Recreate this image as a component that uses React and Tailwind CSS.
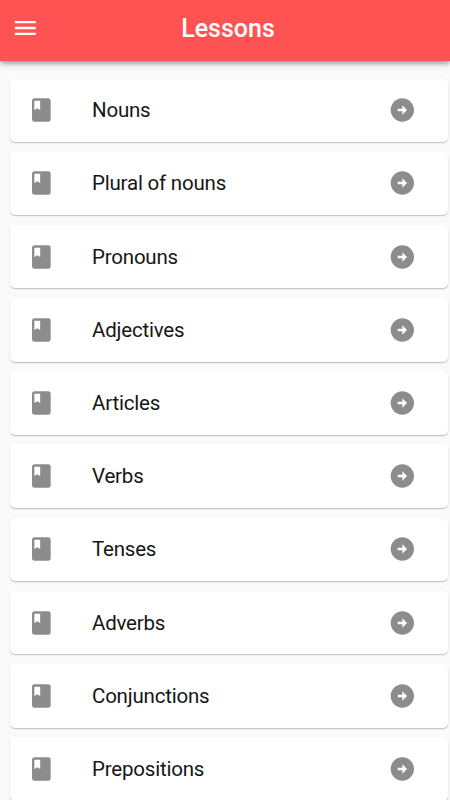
const lessons = [
  "Nouns",
  "Plural of nouns",
  "Pronouns",
  "Adjectives",
  "Articles",
  "Verbs",
  "Tenses",
  "Adverbs",
  "Conjunctions",
  "Prepositions",
];

const Icon = ({ d }) => (
  <svg
    viewBox="-0.3 0 24 24"
    fill="currentColor"
    className="h-7 w-7 shrink-0"
  >
    <path d={d} />
  </svg>
);

const MENU = "M3 18h18v-2H3v2zm0-5h18v-2H3v2zm0-7v2h18V6H3z";
const BOOK =
  "M18 2H6c-1.1 0-2 .9-2 2v16c0 1.1.9 2 2 2h12c1.1 0 2-.9 2-2V4c0-1.1-.9-2-2-2zM6 4h5v8l-2.5-1.5L6 12V4z";
const ARROW =
  "M22 12c0-5.52-4.48-10-10-10S2 6.48 2 12s4.48 10 10 10 10-4.48 10-10zm-10 1H8v-2h4V8l4 4-4 4v-3z";

const LessonCard = ({ title }) => (
  <li className="flex h-[63.5px] shrink-0 items-center rounded-[5px] bg-white pr-[32.3px] pl-[17.5px] text-[#8c8c8c] shadow-[0_1px_1px_rgba(0,0,0,0.14),0_1px_2px_rgba(0,0,0,0.12)]">
    <Icon d={BOOK} />
    <span className="ml-[36.8px] flex-1 text-[20.5px] leading-6 tracking-[-0.2px] text-[#161616]">
      {title}
    </span>
    <Icon d={ARROW} />
  </li>
);

const App = () => {
  return (
    <div className="flex h-[800px] w-full flex-col overflow-hidden bg-[#fafafa] font-['Roboto',sans-serif]">
      <header className="z-10 flex h-[60.5px] shrink-0 items-center bg-[#ff5252] pb-[4px] pl-[11px] text-white shadow-[0_2px_6px_rgba(0,0,0,0.45)]">
        <Icon d={MENU} />
        <h1 className="flex-1 pt-[1.5px] pr-[33px] text-center text-[25px] leading-7 font-medium">
          Lessons
        </h1>
      </header>
      <ul className="flex flex-col gap-[9.7px] pt-[18px] pr-[1.7px] pl-[9.7px]">
        {lessons.map((title) => (
          <LessonCard key={title} title={title} />
        ))}
      </ul>
    </div>
  );
};

export default App;
